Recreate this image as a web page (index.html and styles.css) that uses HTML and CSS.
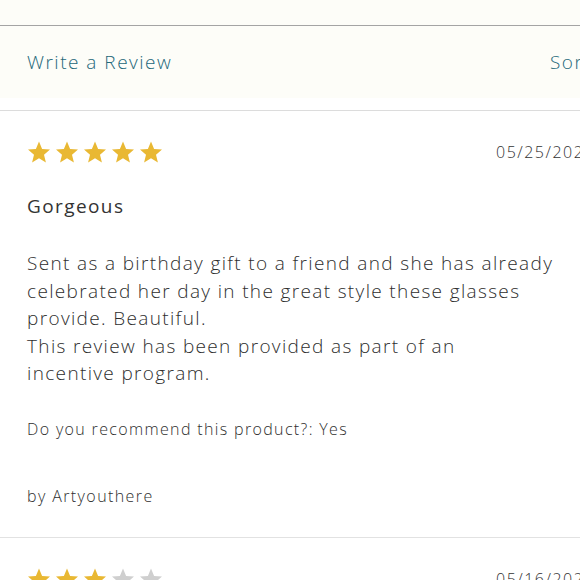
FILE: index.html
```html
<!DOCTYPE html>
<html>
<head>
<meta charset="utf-8">
<link rel="stylesheet" href="styles.css">
</head>
<body>
<div class="page">
  <div class="top"></div>
  <div class="toolbar-wrap">
    <div class="toolbar">
      <a class="write">Write a Review</a>
      <span class="sort">Sort by</span>
    </div>
  </div>
  <div class="review">
    <div class="head">
      <div class="stars">
        <svg class="star on" viewBox="0 0 24 24"><path d="M12 1.5l3.1 7.4 7.9.6-6 5.2 1.9 7.8L12 18.3l-6.9 4.2 1.9-7.8-6-5.2 7.9-.6z"/></svg>
        <svg class="star on" viewBox="0 0 24 24"><path d="M12 1.5l3.1 7.4 7.9.6-6 5.2 1.9 7.8L12 18.3l-6.9 4.2 1.9-7.8-6-5.2 7.9-.6z"/></svg>
        <svg class="star on" viewBox="0 0 24 24"><path d="M12 1.5l3.1 7.4 7.9.6-6 5.2 1.9 7.8L12 18.3l-6.9 4.2 1.9-7.8-6-5.2 7.9-.6z"/></svg>
        <svg class="star on" viewBox="0 0 24 24"><path d="M12 1.5l3.1 7.4 7.9.6-6 5.2 1.9 7.8L12 18.3l-6.9 4.2 1.9-7.8-6-5.2 7.9-.6z"/></svg>
        <svg class="star on" viewBox="0 0 24 24"><path d="M12 1.5l3.1 7.4 7.9.6-6 5.2 1.9 7.8L12 18.3l-6.9 4.2 1.9-7.8-6-5.2 7.9-.6z"/></svg>
      </div>
      <span class="date">05/25/2023</span>
    </div>
    <h3 class="title">Gorgeous</h3>
    <div class="body">
      <p class="text">Sent as a birthday gift to a friend and she has already celebrated her day in the great style these glasses provide. Beautiful.</p>
      <p class="note">This review has been provided as part of an incentive program.</p>
    </div>
    <p class="rec">Do you recommend this product?: Yes</p>
    <p class="by">by Artyouthere</p>
  </div>
  <div class="review">
    <div class="head">
      <div class="stars">
        <svg class="star on" viewBox="0 0 24 24"><path d="M12 1.5l3.1 7.4 7.9.6-6 5.2 1.9 7.8L12 18.3l-6.9 4.2 1.9-7.8-6-5.2 7.9-.6z"/></svg>
        <svg class="star on" viewBox="0 0 24 24"><path d="M12 1.5l3.1 7.4 7.9.6-6 5.2 1.9 7.8L12 18.3l-6.9 4.2 1.9-7.8-6-5.2 7.9-.6z"/></svg>
        <svg class="star on" viewBox="0 0 24 24"><path d="M12 1.5l3.1 7.4 7.9.6-6 5.2 1.9 7.8L12 18.3l-6.9 4.2 1.9-7.8-6-5.2 7.9-.6z"/></svg>
        <svg class="star off" viewBox="0 0 24 24"><path d="M12 1.5l3.1 7.4 7.9.6-6 5.2 1.9 7.8L12 18.3l-6.9 4.2 1.9-7.8-6-5.2 7.9-.6z"/></svg>
        <svg class="star off" viewBox="0 0 24 24"><path d="M12 1.5l3.1 7.4 7.9.6-6 5.2 1.9 7.8L12 18.3l-6.9 4.2 1.9-7.8-6-5.2 7.9-.6z"/></svg>
      </div>
      <span class="date">05/16/2023</span>
    </div>
  </div>
</div>
</body>
</html>
```
FILE: styles.css
```css
html, body {
  margin: 0;
  padding: 0;
  background: #ffffff;
  overflow: hidden;
}
.page {
  width: 660px;
  font-family: "Open Sans", Lato, sans-serif;
  font-weight: 400;
  color: #3a3a3a;
}
.top {
  height: 25px;
  background: #fdfdf8;
  border-bottom: 1px solid #a4a4a4;
}
.toolbar-wrap {
  padding-bottom: 12px;
  border-bottom: 1px solid #dcdcdc;
}
.toolbar {
  height: 72px;
  background: #fdfdf8;
  display: flex;
  align-items: center;
  padding: 0 27px;
  font-size: 19px;
  font-weight: 350;
  letter-spacing: 1.5px;
  color: #24687a;
}
.write {
  flex: 0 0 523px;
}
.review {
  padding: 29px 27px 0;
  border-bottom: 1px solid #e2e2e2;
}
.head {
  display: grid;
  grid-template-columns: 469px auto;
  align-items: center;
}
.stars {
  display: flex;
  gap: 4px;
}
.star {
  width: 24px;
  height: 24px;
  display: block;
}
.star.on { fill: #e9b833; }
.star.off { fill: #cfcfcf; }
.date {
  font-size: 16px;
  font-weight: 350;
  letter-spacing: 1.5px;
  color: #333;
}
.title {
  margin: 29px 0 0;
  font-size: 19px;
  font-weight: 380;
  letter-spacing: 1.4px;
  color: #333;
  line-height: 26px;
}
.body {
  margin: 31px 0 0;
  width: 532px;
  font-size: 19px;
  font-weight: 350;
  line-height: 27.5px;
  letter-spacing: 1.35px;
  color: #2e2e2e;
}
.text, .note {
  margin: 0;
}
.note {
  max-width: 450px;
}
.rec {
  margin: 30px 0 0;
  font-size: 16px;
  font-weight: 350;
  letter-spacing: 1.35px;
  color: #2e2e2e;
}
.by {
  margin: 45px 0 0;
  padding-bottom: 30px;
  font-size: 16px;
  font-weight: 350;
  letter-spacing: 1.4px;
  color: #2e2e2e;
}
```
